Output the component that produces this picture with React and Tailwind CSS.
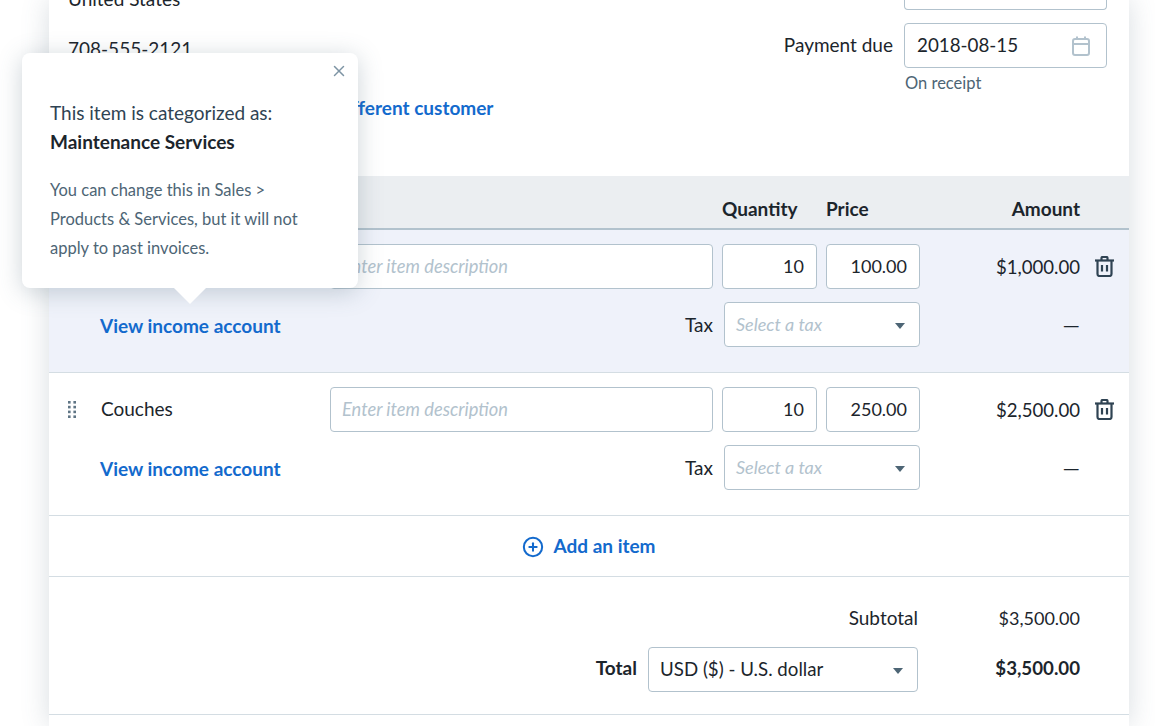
import { X, CirclePlus } from "lucide-react";

const font = { fontFamily: "Lato, sans-serif" };

function Trash() {
  return (
    <svg width="19" height="21" viewBox="0 0 19 21" fill="none" stroke="#2f4353" strokeWidth="2.2">
      <path d="M0 4.5h19" />
      <path d="M6.5 4V2a1 1 0 0 1 1-1h4a1 1 0 0 1 1 1v2" />
      <path d="M2.5 4.5V18a2 2 0 0 0 2 2h10a2 2 0 0 0 2-2V4.5" />
      <path d="M7 9v6.5M12 9v6.5" />
    </svg>
  );
}

function Calendar() {
  return (
    <svg width="18" height="20" viewBox="0 0 18 20" fill="none" stroke="#b2c2cd" strokeWidth="2">
      <rect x="1" y="3" width="16" height="16" rx="2" />
      <path d="M1 8h16M5 0.5V4M13 0.5V4" />
    </svg>
  );
}

function Handle() {
  return (
    <svg width="8" height="17" viewBox="0 0 8 17" fill="#5f7585">
      {[0, 4.8, 9.6, 14.4].map((y) => (
        <g key={y}>
          <rect x="0" y={y} width="2.6" height="2.6" />
          <rect x="5.4" y={y} width="2.6" height="2.6" />
        </g>
      ))}
    </svg>
  );
}

function Caret() {
  return <div className="w-0 h-0 mt-[2px] border-x-[5px] border-x-transparent border-t-[6px] border-t-[#4d6575]" />;
}

function Field({ className, children }) {
  return (
    <div className={`h-[45px] bg-white border border-[#b2c2cd] rounded-[4px] flex items-center ${className}`}>
      {children}
    </div>
  );
}

function ItemRow({ name, qty, price, amount, active }) {
  return (
    <div className={`h-[143px] border-b border-[#d4dde3] pt-[14px] ${active ? "bg-[#eff2fa]" : "bg-white"}`}>
      <div className="flex items-center">
        <div className="w-[52px] flex justify-end pr-[25px]">
          <Handle />
        </div>
        <div className="w-[229px] text-[19px] text-[#1c252c] -mt-[1px]">{name}</div>
        <Field className="w-[383px] px-[11px] text-[18.3px] italic text-[#b2c2cd]">Enter item description</Field>
        <Field className="w-[95px] ml-[9px] justify-end px-3 text-[18px] text-[#1c252c]">{qty}</Field>
        <Field className="w-[94px] ml-[9px] justify-end px-3 text-[18px] text-[#1c252c]">{price}</Field>
        <div className="w-[160px] text-right text-[18.6px] text-[#1c252c] mt-[2px]">{amount}</div>
        <div className="ml-[15px] -mt-[1px]">
          <Trash />
        </div>
      </div>
      <div className="flex items-center mt-[13px]">
        <a className="ml-[51px] w-[544px] text-[19px] font-bold text-[#136acd] mt-[3px]">View income account</a>
        <div className="w-[69px] text-right text-[19px] text-[#1c252c] mt-[1px]">Tax</div>
        <Field className="w-[196px] ml-[11px] pl-[11px] pr-[14px] justify-between text-[18px] italic text-[#b2c2cd]">
          Select a tax
          <Caret />
        </Field>
        <div className="w-[160px] text-right text-[22px] leading-none text-[#1c252c]">—</div>
      </div>
    </div>
  );
}

export default function App() {
  return (
    <div className="relative h-[726px] w-full overflow-hidden bg-white" style={font}>
      <main className="ml-[49px] w-[1080px] h-[726px] bg-white shadow-[0_0_26px_rgba(77,101,117,0.22)]">
        {/* customer + dates */}
        <section className="h-[176px] flex justify-between pl-[19px] pr-[22px] text-[#1c252c] overflow-hidden">
          <div className="text-[19px]">
            <p className="-mt-[14px] leading-[26px]">United States</p>
            <p className="mt-[24px] leading-[26px]">708-555-2121</p>
            <a className="block mt-[33px] ml-[186px] text-[19px] font-bold text-[#136acd] leading-[26px]">
              Choose a different customer
            </a>
          </div>
          <div className="flex flex-col items-end">
            <div className="w-[203px] h-[10px] border border-t-0 border-[#b2c2cd] rounded-b-[4px]" />
            <div className="flex mt-[13px]">
              <div className="mr-[11px] mt-[9px] text-[19px] leading-[26px]">Payment due</div>
              <div>
                <Field className="w-[203px] pl-3 pr-[16px] justify-between text-[18.8px]">
                  2018-08-15
                  <Calendar />
                </Field>
                <p className="mt-[4px] ml-[1px] text-[16.5px] leading-[22px] text-[#4d6575]">On receipt</p>
              </div>
            </div>
          </div>
        </section>

        {/* table */}
        <div className="h-[54px] bg-[#ebeef1] border-b-2 border-[#b2c2cd] flex items-center text-[19px] font-bold text-[#1c252c] pt-[15px]">
          <div className="ml-[673px] w-[104px]">Quantity</div>
          <div className="w-[94px]">Price</div>
          <div className="w-[160px] text-right">Amount</div>
        </div>
        <ItemRow qty="10" price="100.00" amount="$1,000.00" active />
        <ItemRow name="Couches" qty="10" price="250.00" amount="$2,500.00" />
        <div className="h-[61px] border-b border-[#d4dde3] flex items-center justify-center gap-[9px] text-[19px] font-bold text-[#136acd] pt-[1px]">
          <CirclePlus size={22} strokeWidth={2.2} />
          Add an item
        </div>

        {/* totals */}
        <section className="h-[138px] border-b border-[#d4dde3] pt-[28px] text-[#1c252c]">
          <div className="flex justify-end items-center pr-[49px] h-[26px] text-[19px]">
            <div>Subtotal</div>
            <div className="w-[162px] text-right text-[18px]">$3,500.00</div>
          </div>
          <div className="flex justify-end items-center pr-[49px] mt-[16px]">
            <div className="text-[19px] font-bold mr-[11px] -mt-[2px]">Total</div>
            <Field className="w-[270px] pl-[11px] pr-[14px] justify-between text-[18.7px]">
              USD ($) - U.S. dollar
              <Caret />
            </Field>
            <div className="w-[162px] text-right text-[18.7px] font-bold -mt-[2px]">$3,500.00</div>
          </div>
        </section>
      </main>

      {/* popover over the first row */}
      <div className="absolute left-[22px] top-[53px] w-[336px] h-[235px] bg-white rounded-[8px] shadow-[0_4px_24px_rgba(77,101,117,0.28)] px-[28px] pt-[45px]">
        <button className="absolute right-[10px] top-[9px] text-[#7d94a4]">
          <X size={18} strokeWidth={2} />
        </button>
        <p className="text-[19px] leading-[29px] text-[#2f4353]">This item is categorized as:</p>
        <p className="text-[19px] leading-[29px] font-bold text-[#1c252c]">Maintenance Services</p>
        <p className="mt-[20px] text-[16.5px] leading-[29px] text-[#4d6575]">
          You can change this in Sales &gt;
          <br />
          Products &amp; Services, but it will not
          <br />
          apply to past invoices.
        </p>
        <div className="absolute left-[152px] -bottom-[16px] w-0 h-0 border-x-[16px] border-x-transparent border-t-[16px] border-t-white" />
      </div>
    </div>
  );
}
